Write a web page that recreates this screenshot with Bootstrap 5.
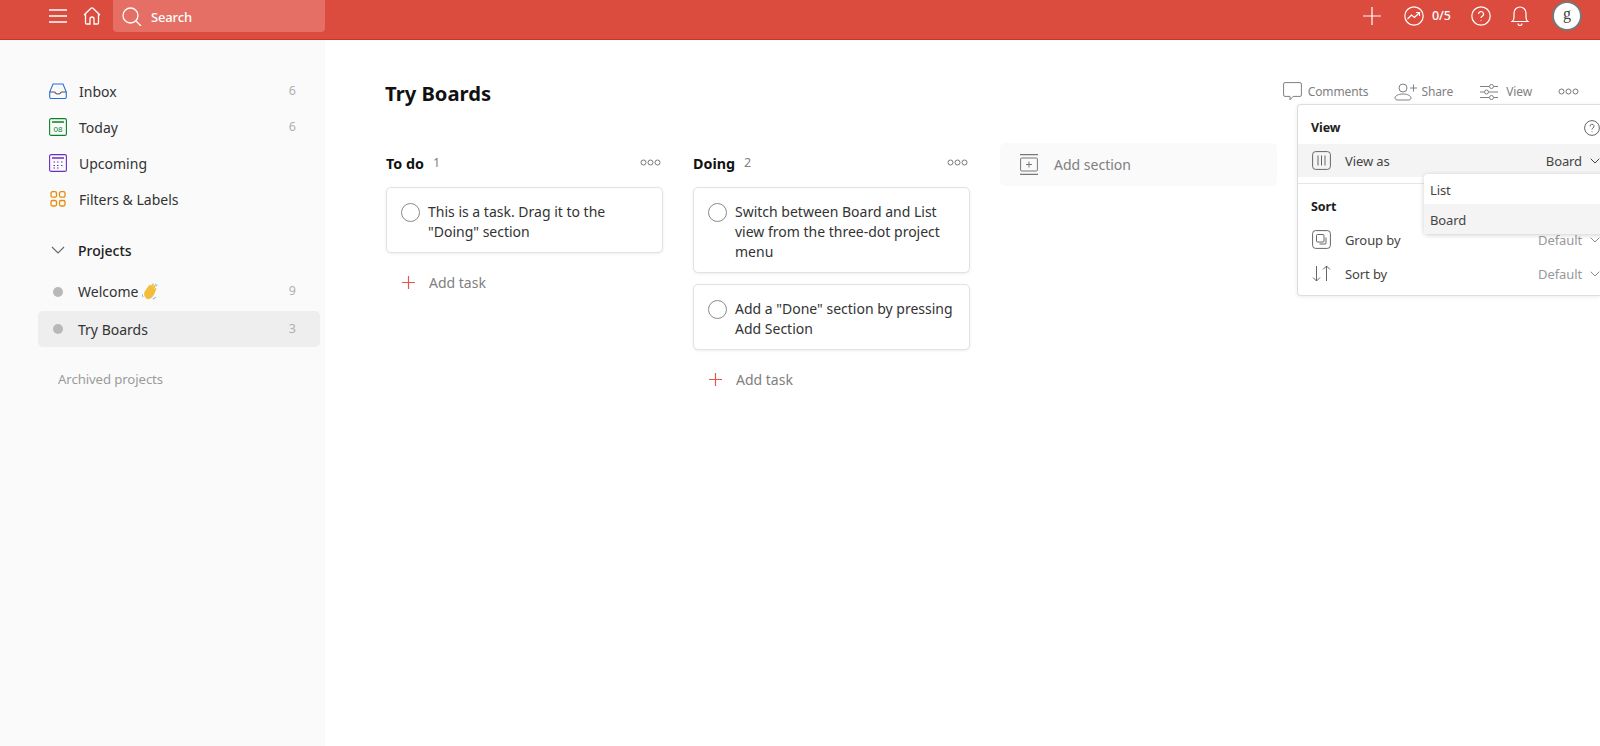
<!DOCTYPE html>
<html lang="en"><head><meta charset="utf-8"><title>Try Boards</title>
<link href="https://cdn.jsdelivr.net/npm/bootstrap@5.3.0/dist/css/bootstrap.min.css" rel="stylesheet">
<style>
html,body{height:100%;overflow:hidden}
body{font-family:"Noto Sans","Open Sans",sans-serif;font-size:14px;color:#202020;background:#fff}
svg{display:block;flex:none;fill:none;stroke:currentColor}
.topbar{height:40px;background:#db4c3f;border-bottom:1px solid #c53727;color:#fff;padding:0 18px 7px 49px}
.topbar .searchbox{width:212px;height:32px;background:#e56f64;border-radius:0 0 4px 4px;margin-left:12px;padding-left:9px;font-size:13px;gap:9px;font-weight:500;letter-spacing:-.15px}
.searchlabel{padding-top:3px}
.avatar{width:30px;height:30px;border-radius:50%;background:#fff;border:2px solid #777;color:#444;font-family:"Liberation Serif",serif;font-size:16px;line-height:22px;text-align:center;margin-left:23px}
.shell{height:706px;position:relative}
.sidebar{width:325px;background:#fafafa;padding:33px 5px 0 38px}
.navrow{height:36px;padding:0 24px 0 11px;gap:12px;border-radius:5px;color:#333}
.navrow .cnt{margin-left:auto;color:#b0b0b0;font-size:12.5px}
.navrow.active-row{background:#eee}
.navrow.tallrow{height:37px;padding-bottom:2px}
.dot{width:10px;height:10px;border-radius:50%;background:#b8b8b8;margin:0 3px 0 4px}
.projhead{font-weight:500;color:#202020;margin-top:15px;margin-bottom:6px;height:36px}
.archived{color:#9a9a9a;font-size:13.2px;letter-spacing:-.1px;padding:23px 0 0 20px}
.content{padding:0 0 0 60px;flex:1}
.titlerow{height:103px;padding-right:21px}
.pagetitle{font-size:20.2px;font-weight:700;color:#111;margin:0;padding-top:3px}
.tool{color:#808080;font-size:12px;gap:6px;height:24px;letter-spacing:-.1px}
.board{gap:30px;align-items:flex-start;padding-left:1px}
.boardcol{width:277px}
.colhead{height:44px;padding:0 2px 3px 0;font-weight:700;font-size:14.3px;color:#111}
.colhead .num{color:#808080;font-weight:400;font-size:12.5px;margin-left:9px}
.morebtn{color:#777;margin-left:auto}
.colhead .morebtn{margin-bottom:2px}
.taskcard{border:1px solid #e2e2e2;border-radius:5px;box-shadow:0 1px 3px rgba(0,0,0,.07);padding:14px 10px 10px 14px;gap:8px;line-height:20px;margin-bottom:11px;font-size:14px;color:#333}
.circ{width:19px;height:19px;border:1px solid #8a8a8a;border-radius:50%;flex:none;margin-top:1px}
.addtask{color:#808080;height:40px;gap:14px;padding-left:16px;margin-top:-2px}
.addtask svg{color:#e2574c}
.addsec{width:277px;height:43px;background:#fafafa;border-radius:5px;padding-left:20px;gap:16px;color:#808080}
.viewmenu{top:64px;left:1297px;width:303px;height:192px;background:#fff;border:1px solid #ddd;border-right:0;border-radius:4px 0 0 4px;box-shadow:0 1px 4px rgba(0,0,0,.08);padding-top:12px;font-size:13px;letter-spacing:-.1px;color:#444;z-index:5}
.menuhead{font-weight:700;color:#202020;font-size:12.5px;padding:0 0 0 13px;height:22px;margin-bottom:5px}
.menurow{height:33px;padding:0 0 0 14px;gap:14px}
.menurow .val{margin-left:auto;color:#444}
.menurow .val.dim{color:#999}
.menurow .lbl,.menurow .val{padding-top:2px}
.hovered{background:#f4f4f4}
.chev{margin-left:-6px}
.sep{border-top:1px solid #e6e6e6;margin:6px 0 12px}
.group-row{margin-top:4px}
.sort-row{margin-top:1px}
.submenu{top:134px;left:1424px;width:200px;height:60px;background:#fff;border-radius:4px;box-shadow:0 1px 5px rgba(0,0,0,.2);font-size:13px;letter-spacing:-.1px;color:#444;z-index:6}
.submenu div{height:30px;line-height:33px;padding-left:6px}
.submenu div.hovered{line-height:32px}
</style></head><body>
<header class="topbar d-flex align-items-center">
<svg width="18" height="14" viewBox="0 0 18 14" stroke-width="1.3"><path d="M0 1h18M0 7h18M0 13h18"/></svg>
<svg class="ms-3" width="18" height="18" viewBox="0 0 18 18" stroke-width="1.3"><path d="M1 8 8 1.3a1.5 1.5 0 0 1 2 0L17 8M2.5 7v9a1 1 0 0 0 1 1h3.500v-5a2 2 0 0 1 4 0v5h3.500a1 1 0 0 0 1-1V7"/></svg>
<div class="searchbox d-flex align-items-center"><svg width="20" height="20" viewBox="0 0 20 20" stroke-width="1.3"><circle cx="8.500" cy="9.500" r="7.500"/><path d="m14 15 5 5"/></svg><span class="searchlabel">Search</span></div>
<div class="ms-auto d-flex align-items-center">
<svg width="18" height="18" viewBox="0 0 18 18" stroke-width="1.2"><path d="M9 0v18M0 9h18"/></svg>
<svg style="margin-left:23px" width="20" height="20" viewBox="0 0 20 20" stroke-width="1.2"><circle cx="10" cy="10" r="9.200"/><path d="m3.500 13 4-4 3 2.500 5-5M12 6.500h3.500V10"/></svg>
<span class="ms-2" style="font-size:12.5px;font-weight:500">0/5</span>
<svg style="margin-left:20px" width="20" height="20" viewBox="0 0 20 20" stroke-width="1.2"><circle cx="10" cy="10" r="9.200"/><path d="M7.500 8a2.500 2.500 0 1 1 3.700 2.200c-.8.500-1.200 1-1.200 1.800M10 14.200v.8"/></svg>
<svg style="margin-left:20px" width="18" height="20" viewBox="0 0 18 20" stroke-width="1.2"><path d="M1 15.500c1.500-1 2-2 2-4V7a6 6 0 0 1 12 0v4.500c0 2 .5 3 2 4ZM7 17.500a2 2 0 0 0 4 0"/></svg>
<div class="avatar">g</div>
</div>
</header>
<div class="shell d-flex">
<aside class="sidebar">
<div class="navrow d-flex align-items-center"><svg style="color:#246fe0" width="18" height="16" viewBox="0 0 18 16" stroke-width="1.100"><path d="M4 1h10l3.300 8v5a1.500 1.500 0 0 1-1.500 1.500H2.200A1.500 1.500 0 0 1 .7 14V9Z"/><path d="M.7 9H5q1 0 1.500 1t2.500 1 2.500-1T13 9h4.300" style="stroke:#555"/></svg><span>Inbox</span><span class="cnt">6</span></div>
<div class="navrow d-flex align-items-center"><svg style="color:#058527" width="18" height="18" viewBox="0 0 18 18" stroke-width="1.100"><rect x=".6" y=".6" width="16.800" height="16.800" rx="1.500"/><path d="M3 4h12" stroke-width="1.500"/><text x="9" y="14" text-anchor="middle" font-size="8" font-family="Liberation Sans" fill="#058527" stroke="none">08</text></svg><span>Today</span><span class="cnt">6</span></div>
<div class="navrow d-flex align-items-center"><svg style="color:#692fc2" width="18" height="18" viewBox="0 0 18 18" stroke-width="1.100"><rect x=".6" y=".6" width="16.800" height="16.800" rx="1.500"/><path d="M3 4h12" stroke-width="1.500"/><path d="M4.500 8h1.500M8 8h1.500M12 8h1.500M4.500 11.500h1.500M8 11.500h1.500M12 11.500h1.500M4.500 14h1.500M8 14h1.500" stroke-width="1.200"/></svg><span>Upcoming</span><span class="cnt"></span></div>
<div class="navrow d-flex align-items-center"><svg style="color:#eb8909" width="18" height="18" viewBox="0 0 18 18" stroke-width="1.300"><rect x="2" y="1.700" width="5.500" height="5.500" rx="1.500"/><rect x="10.500" y="1.700" width="5.500" height="5.500" rx="1.500"/><rect x="2" y="10.500" width="5.500" height="5.500" rx="1.500"/><rect x="10.500" y="10.500" width="5.500" height="5.500" rx="1.500"/></svg><span>Filters &amp; Labels</span></div>
<div class="navrow projhead d-flex align-items-center"><svg style="color:#666;margin:0 1px 0 2px" width="14" height="8" viewBox="0 0 14 8" stroke-width="1.100"><path d="m1 1 6 6 6-6"/></svg><span>Projects</span></div>
<div class="navrow tallrow d-flex align-items-center"><span class="dot"></span><span class="d-flex align-items-center">Welcome&nbsp;<svg width="16" height="17" viewBox="0 0 16 17" stroke="none"><path fill="#f3bd3c" stroke="none" d="M4.500 15.500C2 13.800 1.600 11 2.600 8.800L7 2.200c.7-.9 2-.1 1.500 1l1.700-2.300c.8-.9 2.100 0 1.500 1.100l-1.500 2.600 2-2.300c.8-.8 2 .1 1.400 1.100l-2 3.300 1.500-1.500c.8-.6 1.700.2 1.200 1.100-1.300 2.300-1.500 4.400-3.300 6.900-2 2.800-5.100 3.400-6.500 2.600Z"/><path fill="#5aa9e6" stroke="none" d="M.3 10.500 1.500 14l-.6.600L0 12ZM10.500 16l3.300-2.200.5.500-3 2.300ZM13.500.5l2 2.300-.5.500-2-2.300Z"/></svg></span><span class="cnt">9</span></div>
<div class="navrow active-row d-flex align-items-center"><span class="dot"></span><span>Try Boards</span><span class="cnt">3</span></div>
<div class="archived">Archived projects</div>
</aside>
<main class="content">
<div class="titlerow d-flex align-items-center">
<h1 class="pagetitle">Try Boards</h1>
<div class="ms-auto d-flex align-items-center">
<div class="tool d-flex align-items-center"><svg width="19" height="19" viewBox="0 0 19 19" stroke-width="1"><path d="M2 .6h15a1.400 1.400 0 0 1 1.400 1.400v11a1.400 1.400 0 0 1-1.400 1.400H10l-3 3.500v-3.500H2A1.400 1.400 0 0 1 .6 13V2A1.400 1.400 0 0 1 2 .6Z"/></svg><span>Comments</span></div>
<div class="tool d-flex align-items-center" style="margin-left:26px;gap:3px"><svg width="24" height="18" viewBox="0 0 24 18" stroke-width="1"><circle cx="9" cy="5" r="4"/><path d="M1 15c0-2 3-4 8-4s8 2 8 4c0 1.500-1.500 2-3 2H4c-1.500 0-3-.5-3-2ZM16 5h7M19.500 1.500v7"/></svg><span>Share</span></div>
<div class="tool d-flex align-items-center" style="margin-left:27px;gap:8px"><svg width="18" height="16" viewBox="0 0 18 16" stroke-width="1"><path d="M0 2.500h9M14 2.500h4M0 8h4M9 8h9M0 13.500h9M14 13.500h4"/><circle cx="11.500" cy="2.500" r="2"/><circle cx="6.500" cy="8" r="2"/><circle cx="11.500" cy="13.500" r="2"/></svg><span>View</span></div>
<svg class="morebtn" style="margin-left:26px" width="21" height="7" viewBox="0 0 21 7" stroke-width="1"><circle cx="3.500" cy="3.500" r="2.500"/><circle cx="10.500" cy="3.500" r="2.500"/><circle cx="17.500" cy="3.500" r="2.500"/></svg>
</div></div>
<div class="board d-flex">
<section class="boardcol">
<div class="colhead d-flex align-items-center"><span>To do</span><span class="num">1</span><svg class="morebtn" width="21" height="7" viewBox="0 0 21 7" stroke-width="1"><circle cx="3.500" cy="3.500" r="2.500"/><circle cx="10.500" cy="3.500" r="2.500"/><circle cx="17.500" cy="3.500" r="2.500"/></svg></div>
<div class="card taskcard flex-row"><span class="circ"></span><span>This is a task. Drag it to the "Doing" section</span></div>
<div class="addtask d-flex align-items-center"><svg width="13" height="13" viewBox="0 0 13 13" stroke-width="1.200"><path d="M6.500 0v13M0 6.500h13"/></svg><span>Add task</span></div>
</section>
<section class="boardcol">
<div class="colhead d-flex align-items-center"><span>Doing</span><span class="num">2</span><svg class="morebtn" width="21" height="7" viewBox="0 0 21 7" stroke-width="1"><circle cx="3.500" cy="3.500" r="2.500"/><circle cx="10.500" cy="3.500" r="2.500"/><circle cx="17.500" cy="3.500" r="2.500"/></svg></div>
<div class="card taskcard flex-row"><span class="circ"></span><span>Switch between Board and List view from the three-dot project menu</span></div>
<div class="card taskcard flex-row"><span class="circ"></span><span>Add a "Done" section by pressing Add Section</span></div>
<div class="addtask d-flex align-items-center"><svg width="13" height="13" viewBox="0 0 13 13" stroke-width="1.200"><path d="M6.500 0v13M0 6.500h13"/></svg><span>Add task</span></div>
</section>
<div class="addsec d-flex align-items-center"><svg style="color:#777" width="18" height="21" viewBox="0 0 18 21" stroke-width="1"><path d="M0 .6h18M0 20.400h18" stroke-width="1.200"/><rect x=".6" y="4" width="16.800" height="13" rx="1"/><path d="M9 7.500v6M6 10.500h6"/></svg><span>Add section</span></div>
</div>
</main>
<div class="viewmenu position-absolute">
<div class="menuhead d-flex align-items-center justify-content-between"><span>View</span><svg style="color:#666" width="16" height="16" viewBox="0 0 16 16" stroke-width="1"><circle cx="8" cy="8" r="7.400"/><path d="M6 6.300a2 2 0 1 1 3 1.700c-.7.400-1 .9-1 1.500M8 11.300v.8"/></svg></div>
<div class="menurow hovered d-flex align-items-center"><svg style="color:#666" width="19" height="19" viewBox="0 0 19 19" stroke-width="1"><rect x=".6" y=".6" width="17.800" height="17.800" rx="3"/><path d="M6 4.500v10M9.500 4.500v10M13 4.500v10"/></svg><span class="lbl">View as</span><span class="val">Board</span><svg class="chev" width="10" height="6" viewBox="0 0 10 6" stroke-width="1"><path d="m.7.700 4.300 4.300 4.300-4.300"/></svg></div>
<div class="sep"></div>
<div class="menuhead d-flex align-items-center"><span>Sort</span></div>
<div class="menurow group-row d-flex align-items-center"><svg style="color:#666" width="19" height="19" viewBox="0 0 19 19" stroke-width="1"><rect x=".6" y=".6" width="17.800" height="17.800" rx="3"/><rect x="4.500" y="4.500" width="7.500" height="7.500" rx="1"/><path d="M14 7.500v5.500a1 1 0 0 1-1 1H7.500"/></svg><span class="lbl">Group by</span><span class="val dim">Default</span><svg class="chev" style="color:#888" width="10" height="6" viewBox="0 0 10 6" stroke-width="1"><path d="m.7.700 4.300 4.300 4.300-4.300"/></svg></div>
<div class="menurow sort-row d-flex align-items-center"><svg style="color:#666" width="19" height="19" viewBox="0 0 19 19" stroke-width="1"><path d="M4.500 2v15M1 13.500 4.500 17 8 13.500M14.500 17V2M11 5.500 14.500 2 18 5.500"/></svg><span class="lbl">Sort by</span><span class="val dim">Default</span><svg class="chev" style="color:#888" width="10" height="6" viewBox="0 0 10 6" stroke-width="1"><path d="m.7.700 4.300 4.300 4.300-4.300"/></svg></div>
</div>
<div class="submenu position-absolute"><div>List</div><div class="hovered">Board</div></div>
</div>
<script src="https://cdn.jsdelivr.net/npm/bootstrap@5.3.0/dist/js/bootstrap.bundle.min.js"></script>
</body></html>
